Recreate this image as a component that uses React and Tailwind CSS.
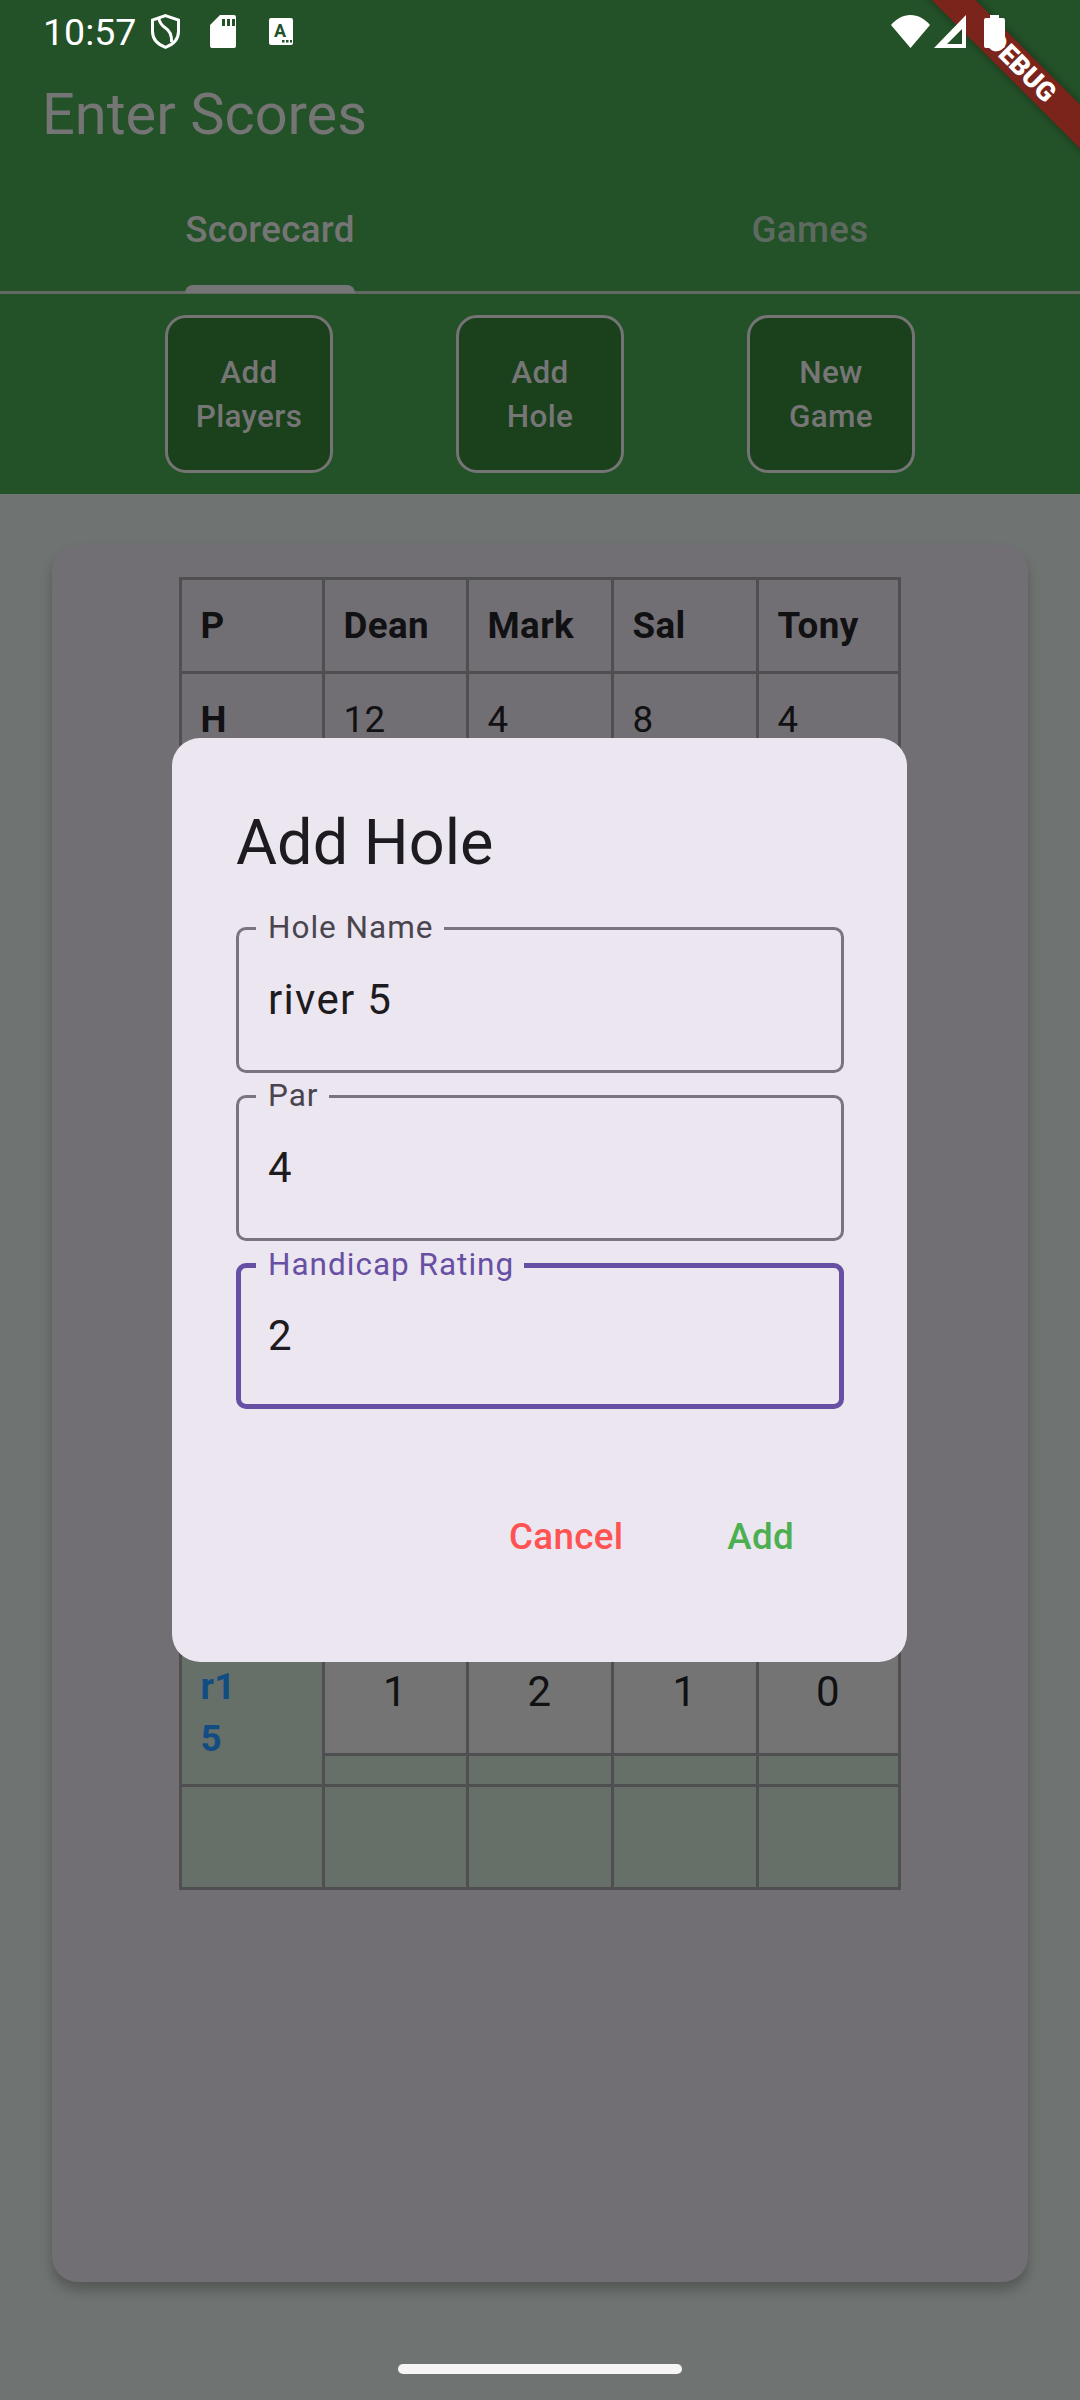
import React from 'react';

const columns = ['Dean', 'Mark', 'Sal', 'Tony'];
const handicaps = [12, 4, 8, 4];
const holeScores = [1, 2, 1, 0];

const Field = ({ label, value, focused }) => (
  <div
    className={`relative flex h-[146px] w-[608px] items-center rounded-[10px] border-solid ${
      focused ? 'border-[5px] border-[#6750a4] pl-[27px]' : 'border-[3px] border-[#79747e] pl-[29px]'
    }`}
  >
    <span
      className={`absolute bg-[#ece6f0] pl-[12px] pr-[10px] text-[31.5px] leading-[37px] tracking-[1px] ${
        focused ? 'left-[15px] top-[-22px] text-[#6750a4]' : 'left-[17px] top-[-21px] text-[#49454f]'
      }`}
    >
      {label}
    </span>
    <span className="text-[42px] leading-[50px] tracking-[1.3px] text-[#1d1b20]">{value}</span>
  </div>
);

const ActionButton = ({ first, second }) => (
  <button className="flex h-[158px] w-[168px] flex-col items-center justify-center rounded-[21px] border-[3px] border-[#747474] bg-[#1a401c] pt-[2px] text-[31.5px] font-medium leading-[44px] tracking-[0.3px] text-[#767676]">
    <span>{first}</span>
    <span>{second}</span>
  </button>
);

const StatusIcons = () => (
  <div className="flex items-center">
    <span className="ml-[43px] w-[92px] text-[37.5px] leading-[44px] text-white">10:57</span>
    {/* shield */}
    <svg className="ml-[16px]" width="29" height="35" viewBox="0 0 29 35" fill="none" stroke="white" strokeWidth="3">
      <path d="M14.5 1.7 27.5 6v11.5c0 7.5-5.5 13-13 15.8C7 30.5 1.5 25 1.5 17.5V6Z" />
      <path d="M7.5 3.5c1 5 3 8 7 10.5 4 2.5 6.5 6 6 14" />
    </svg>
    {/* sd card */}
    <svg className="ml-[30px]" width="26" height="33" viewBox="0 0 26 33">
      <path
        fill="white"
        fillRule="evenodd"
        d="M10 0h14a2 2 0 0 1 2 2v29a2 2 0 0 1-2 2H2a2 2 0 0 1-2-2V10ZM12 4v7h3V4Zm5 0v7h3V4Zm5 0v7h3V4Z"
      />
    </svg>
    {/* keyboard A */}
    <svg className="ml-[33px]" width="24" height="27" viewBox="0 0 24 27">
      <rect width="24" height="27" rx="2" fill="white" />
      <text x="11" y="19" textAnchor="middle" fontFamily="Roboto" fontWeight="700" fontSize="18" fill="#235128">
        A
      </text>
      <rect x="13" y="22" width="2.5" height="2.5" fill="#235128" />
      <rect x="17" y="22" width="2.5" height="2.5" fill="#235128" />
      <rect x="21" y="22" width="2" height="2.5" fill="#235128" />
    </svg>
  </div>
);

const SystemIcons = () => (
  <div className="flex items-center">
    <svg width="39" height="33" viewBox="0 0 39 33">
      <path fill="white" d="M0 10C5 4 12 0 19.5 0S34 4 39 10L19.5 33Z" />
    </svg>
    <svg className="ml-[4px]" width="32" height="33" viewBox="0 0 32 33">
      <path fill="white" fillRule="evenodd" d="M32 0v33H0ZM28 14 13 29h15Z" />
    </svg>
    <svg className="ml-[18px] mr-[75px]" width="21" height="33" viewBox="0 0 21 33">
      <path fill="white" d="M6 0h9v3h4a2 2 0 0 1 2 2v26a2 2 0 0 1-2 2H2a2 2 0 0 1-2-2V5a2 2 0 0 1 2-2h4Z" />
    </svg>
  </div>
);

const Scorecard = () => (
  <table className="w-[722px] table-fixed border-collapse text-[36.75px] tracking-[0.4px] text-[#111113]">
    <colgroup>
      <col className="w-[143px]" />
      <col className="w-[144px]" />
      <col className="w-[145px]" />
      <col className="w-[145px]" />
      <col className="w-[142px]" />
    </colgroup>
    <tbody>
      <tr className="h-[94px]">
        <td className="border-[3px] border-[#4f4f51] pl-[19px] font-bold">P</td>
        {columns.map((name) => (
          <td key={name} className="border-[3px] border-[#4f4f51] pl-[19px] font-bold">
            {name}
          </td>
        ))}
      </tr>
      <tr className="h-[94px]">
        <td className="border-[3px] border-[#4f4f51] pl-[19px] font-bold">H</td>
        {handicaps.map((h, i) => (
          <td key={i} className="border-[3px] border-[#4f4f51] pl-[19px]">
            {h}
          </td>
        ))}
      </tr>
      {/* rows behind the dialog */}
      <tr className="h-[874px]">
        {[0, 1, 2, 3, 4].map((i) => (
          <td key={i} className="border-[3px] border-[#4f4f51]" />
        ))}
      </tr>
      <tr className="h-[145px] bg-[#676f69]">
        <td className="border-[3px] border-[#4f4f51] pl-[19px] align-top">
          <div className="w-[60px] pt-[19px] font-bold leading-[52px] text-[#114c82]">r1 5</div>
        </td>
        {holeScores.map((s, i) => (
          <td key={i} className="border-[3px] border-[#4f4f51] p-0 align-top">
            <div className="flex h-[114px] items-end justify-center border-b-[3px] border-[#4f4f51] bg-[#747474] pb-[36px] text-[42px] leading-[50px]">
              {s}
            </div>
          </td>
        ))}
      </tr>
      <tr className="h-[103px] bg-[#676f69]">
        {[0, 1, 2, 3, 4].map((i) => (
          <td key={i} className="border-[3px] border-[#4f4f51]" />
        ))}
      </tr>
    </tbody>
  </table>
);

const App = () => {
  return (
    <div className="relative flex h-[2400px] w-[1080px] flex-col overflow-hidden bg-[#6f7472] font-['Roboto',sans-serif]">
      {/* Header */}
      <div className="h-[494px] bg-[#235128]">
        <div className="relative z-10 flex h-[63px] items-center justify-between">
          <StatusIcons />
          <SystemIcons />
        </div>
        <div className="flex h-[101px] items-center pl-[42px] pt-[1px] text-[57.75px] leading-[70px] text-[#757575]">
          Enter Scores
        </div>
        <div className="flex h-[130px] border-b-[3px] border-[#636a64]">
          <div className="relative flex w-[540px] items-start justify-center pt-[44px] text-[36.75px] font-medium leading-[44px] tracking-[0.3px] text-[#757575]">
            Scorecard
            <div className="absolute bottom-[-2px] h-[8px] w-[170px] rounded-t-[8px] bg-[#757575]" />
          </div>
          <div className="flex w-[540px] items-start justify-center pt-[44px] text-[36.75px] font-medium leading-[44px] tracking-[0.3px] text-[#5e6a60]">
            Games
          </div>
        </div>
        <div className="flex gap-[123px] pl-[165px] pt-[21px]">
          <ActionButton first="Add" second="Players" />
          <ActionButton first="Add" second="Hole" />
          <ActionButton first="New" second="Game" />
        </div>
      </div>

      {/* Body */}
      <div className="flex flex-col items-center">
        <div className="mt-[51px] flex h-[1737px] w-[976px] justify-center rounded-[26px] bg-[#716f74] pr-[1px] pt-[32px] shadow-[0_8px_12px_rgba(0,0,0,0.25)]">
          <div>
            <Scorecard />
          </div>
        </div>
        <div className="mt-[82px] h-[10px] w-[284px] rounded-full bg-[#f5f5f5]" />
      </div>

      {/* Dialog */}
      <div className="absolute left-[172px] top-[738px] h-[924px] w-[735px] rounded-[28px] bg-[#ece6f0] pl-[64px] pt-[63px]">
        <div className="text-[63px] leading-[84px] text-[#1d1b20]">Add Hole</div>
        <div className="mt-[42px] flex flex-col gap-[22px]">
          <Field label="Hole Name" value="river 5" />
          <Field label="Par" value="4" />
          <Field label="Handicap Rating" value="2" focused />
        </div>
        <div className="mt-[107px] flex justify-end gap-[104px] pr-[113px] text-[36.75px] font-medium leading-[42px] tracking-[0.3px]">
          <span className="text-[#ff5252]">Cancel</span>
          <span className="text-[#4caf50]">Add</span>
        </div>
      </div>

      {/* Debug banner */}
      <div className="absolute left-[821px] top-[52px] flex h-[31px] w-[400px] rotate-45 items-center justify-center bg-[#7b241c] text-[26.8px] font-black leading-[31px] text-white shadow-[0_0_8px_rgba(0,0,0,0.35)]">
        DEBUG
      </div>
    </div>
  );
};

export default App;
